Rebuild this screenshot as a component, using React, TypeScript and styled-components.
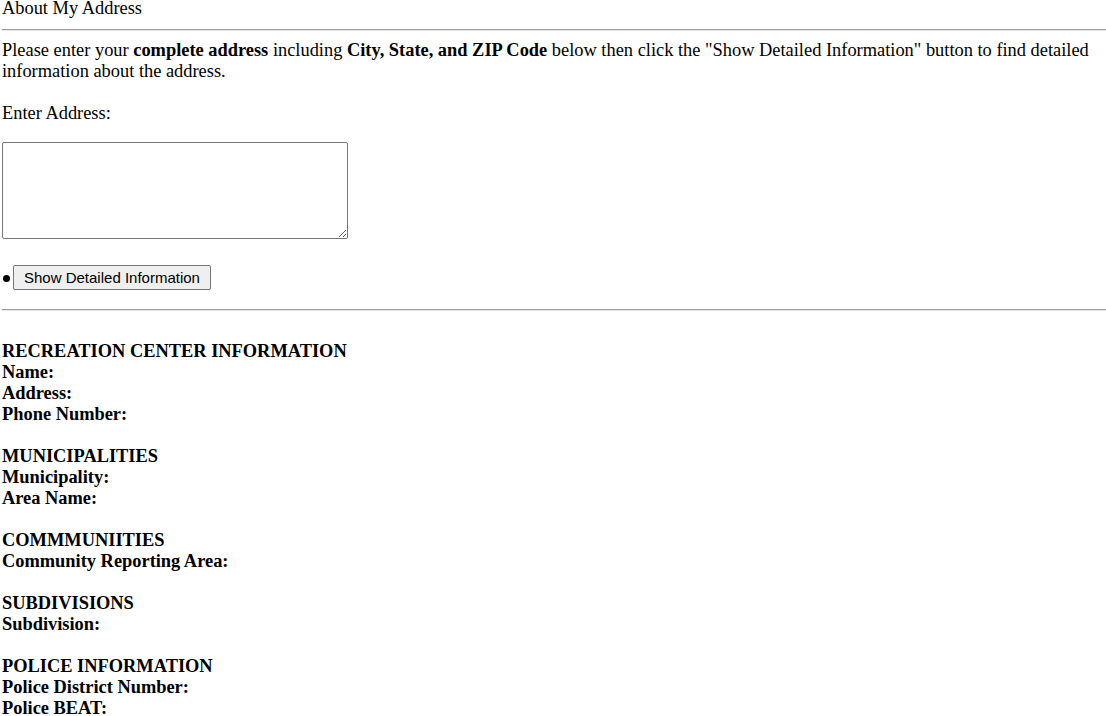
import React from "react";
import styled, { createGlobalStyle } from "styled-components";

const Global = createGlobalStyle`
  html, body { margin: 0; padding: 0; background: #fff; }
  body {
    font-family: "Liberation Serif", "Times New Roman", serif;
    font-size: 18.4px;
    line-height: 21px;
    color: #000;
  }
`;

const Page = styled.div`
  padding: 0 0 0 2px;
`;

const Title = styled.div`
  height: 17px;
  line-height: 17px;
`;

const Rule = styled.hr<{ $top: number; $bottom: number }>`
  margin: ${(p) => p.$top}px 0 ${(p) => p.$bottom}px 0;
  height: 0;
  border: none;
  border-top: 1px solid #a0a0a0;
  border-bottom: 1px solid #e6e6e6;
`;

const Intro = styled.p`
  margin: 0;
  padding-right: 10px;
`;

const Label = styled.div`
  margin-top: 21px;
`;

const AddressBox = styled.textarea`
  display: block;
  box-sizing: border-box;
  margin: 18px 0 0 0;
  width: 346px;
  height: 97px;
  border: 1px solid #767676;
  border-radius: 2px;
  padding: 2px;
  font-family: "Liberation Mono", monospace;
  font-size: 13px;
`;

const ButtonRow = styled.div`
  display: flex;
  align-items: center;
  margin-top: 26px;
  height: 25px;
`;

const Bullet = styled.span`
  display: inline-block;
  width: 7px;
  height: 7px;
  border-radius: 50%;
  background: #000;
  margin: 2px 3px 0 1px;
`;

const ActionButton = styled.button`
  box-sizing: border-box;
  height: 25px;
  padding: 0 10px;
  font-family: "Liberation Sans", Arial, sans-serif;
  font-size: 15px;
  color: #000;
  background: #efefef;
  border: 1px solid #767676;
  border-radius: 2px;
  cursor: pointer;
`;

const Sections = styled.div`
  margin-top: 30px;
  font-weight: bold;
`;

const Section = styled.div`
  margin-bottom: 21px;
`;

const Line = styled.div`
  height: 21px;
  white-space: nowrap;
`;

const sections: { title: string; fields: string[] }[] = [
  { title: "RECREATION CENTER INFORMATION", fields: ["Name:", "Address:", "Phone Number:"] },
  { title: "MUNICIPALITIES", fields: ["Municipality:", "Area Name:"] },
  { title: "COMMMUNIITIES", fields: ["Community Reporting Area:"] },
  { title: "SUBDIVISIONS", fields: ["Subdivision:"] },
  { title: "POLICE INFORMATION", fields: ["Police District Number:", "Police BEAT:"] },
];

export default function App() {
  return (
    <Page>
      <Global />
      <Title>About My Address</Title>
      <Rule $top={12} $bottom={9} />
      <Intro>
        Please enter your <b>complete address</b> including <b>City, State, and ZIP Code</b> below then
        click the "Show Detailed Information" button to find detailed information about the address.
      </Intro>
      <Label>Enter Address:</Label>
      <AddressBox />
      <ButtonRow>
        <Bullet />
        <ActionButton>Show Detailed Information</ActionButton>
      </ButtonRow>
      <Rule $top={19} $bottom={0} />
      <Sections>
        {sections.map((s) => (
          <Section key={s.title}>
            <Line>{s.title}</Line>
            {s.fields.map((f) => (
              <Line key={f}>{f}</Line>
            ))}
          </Section>
        ))}
      </Sections>
    </Page>
  );
}
